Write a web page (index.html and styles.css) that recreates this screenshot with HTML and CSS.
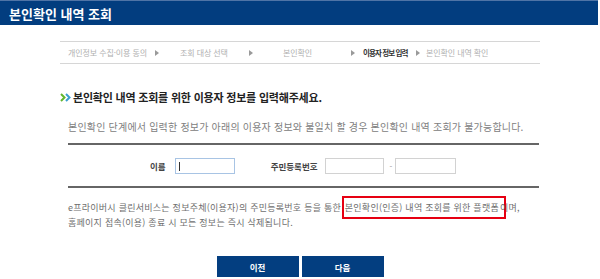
FILE: index.html
```html
<!DOCTYPE html>
<html lang="ko">
<head>
<meta charset="utf-8">
<title>본인확인 내역 조회</title>
<link rel="stylesheet" href="styles.css">
</head>
<body>
<header class="title-bar"><h1>본인확인 내역 조회</h1></header>
<main class="content">
  <nav class="steps">
    <span class="step s1">개인정보 수집·이용 동의</span><i class="arrow"></i>
    <span class="step s2">조회 대상 선택</span><i class="arrow"></i>
    <span class="step s3">본인확인</span><i class="arrow"></i>
    <span class="step s4 active">이용자 정보 입력</span><i class="arrow"></i>
    <span class="step s5">본인확인 내역 확인</span>
  </nav>
  <h2 class="heading"><svg class="chev" width="11" height="9" viewBox="0 0 11 9"><path d="M1 1 L4.5 4.5 L1 8" fill="none" stroke="#62b62e" stroke-width="2"/><path d="M6 1 L9.5 4.5 L6 8" fill="none" stroke="#3c9fcf" stroke-width="2"/></svg>본인확인 내역 조회를 위한 이용자 정보를 입력해주세요.</h2>
  <section class="panel">
    <p class="desc">본인확인 단계에서 입력한 정보가 아래의 이용자 정보와 불일치 할 경우 본인확인 내역 조회가 불가능합니다.</p>
    <div class="form-row">
      <span class="label name-label">이름</span>
      <div class="field field-name focused"><span class="caret"></span></div>
      <span class="label rrn-label">주민등록번호</span>
      <div class="field field-rrn"></div>
      <span class="dash">-</span>
      <div class="field field-rrn field-last"></div>
    </div>
    <p class="notice">e프라이버시 클린서비스는 정보주체(이용자)의 주민등록번호 등을 통한 <span class="mark">본인확인(인증) 내역 조회를 위한 플랫폼</span>이며,<br>홈페이지 접속(이용) 종료 시 모든 정보는 즉시 삭제됩니다.</p>
  </section>
</main>
<div class="buttons">
  <button class="btn">이전</button>
  <button class="btn">다음</button>
</div>
</body>
</html>
```
FILE: styles.css
```css
html, body {
  margin: 0;
  padding: 0;
  background: #fff;
}
body {
  width: 600px;
  font-family: "Noto Sans CJK KR", "Noto Sans", sans-serif;
  color: #333;
}
.title-bar {
  width: 598px;
  height: 24px;
  background: #023d7f;
  border-top: 1px solid #4f74a6;
  display: flex;
  align-items: center;
}
.title-bar h1 {
  margin: 0 0 0 9px;
  font-size: 13px;
  font-weight: bold;
  letter-spacing: 0;
  color: #fff;
  line-height: 15px;
}
.content {
  margin-left: 60px;
  width: 480px;
}
.steps {
  margin-top: 16px;
  height: 21px;
  border-top: 1px solid #d6d6d6;
  border-bottom: 1px solid #d6d6d6;
  display: flex;
  align-items: center;
  padding-left: 8px;
}
.step {
  font-size: 8px;
  line-height: 10px;
  color: #b0b0b0;
  letter-spacing: -0.1px;
  white-space: nowrap;
}
.step.active {
  color: #333;
  font-weight: bold;
  font-size: 7.5px;
  letter-spacing: -0.9px;
}
.s1 { width: 87px; }
.s2 { width: 69px; margin-left: 20px; }
.s3 { width: 68px; margin-left: 29px; }
.s4 { width: 53px; margin-left: 7px; }
.s5 { margin-left: 5px; }
.arrow {
  width: 0;
  height: 0;
  border-top: 3px solid transparent;
  border-bottom: 3px solid transparent;
  border-left: 4px solid #9a9a9a;
  margin-right: 1px;
}
.heading {
  margin: 26px 0 0 0;
  display: flex;
  align-items: center;
  font-size: 11px;
  line-height: 14px;
  font-weight: bold;
  color: #222;
  letter-spacing: -0.2px;
}
.chev {
  margin-right: 2px;
}
.panel {
  margin-left: 8px;
  width: 471px;
}
.desc {
  margin: 16px 0 0 0;
  font-size: 10px;
  line-height: 14px;
  color: #808080;
  letter-spacing: 0.2px;
  padding-bottom: 9px;
  border-bottom: 2px solid #666;
}
.form-row {
  display: flex;
  align-items: center;
  padding: 13px 0 12px 0;
  border-bottom: 2px solid #666;
}
.label {
  font-size: 8.5px;
  font-weight: bold;
  color: #444;
  line-height: 10px;
  white-space: nowrap;
}
.name-label { margin-left: 82px; }
.rrn-label { margin-left: 36px; }
.field {
  height: 14px;
  border: 1px solid #d2d2d2;
  background: #fff;
  display: flex;
  align-items: center;
}
.field-name {
  width: 58px;
  margin-left: 9px;
}
.focused {
  border-color: #a8c4e4;
}
.caret {
  width: 1px;
  height: 9px;
  background: #333;
  margin-left: 3px;
}
.field-rrn {
  width: 57px;
}
.field-last {
  width: 59px;
}
.rrn-label + .field { margin-left: 7px; }
.dash {
  font-size: 8px;
  color: #999;
  margin: 0 3px 0 6px;
}
.notice {
  margin: 12px 0 0 0;
  font-size: 9px;
  line-height: 15px;
  color: #6e6e6e;
  letter-spacing: 0.25px;
}
.mark {
  border: 2px solid #e60012;
  padding: 3px 5px 3px 1px;
  margin-left: -2px;
  margin-right: -6px;
}
.buttons {
  margin-top: 26px;
  display: flex;
  justify-content: center;
  gap: 3px;
  width: 600px;
}
.btn {
  width: 82px;
  height: 21px;
  background: #033e80;
  border: 0;
  color: #fff;
  font-family: "Noto Sans CJK KR", sans-serif;
  font-size: 8.5px;
  font-weight: bold;
  padding: 0;
}
```
